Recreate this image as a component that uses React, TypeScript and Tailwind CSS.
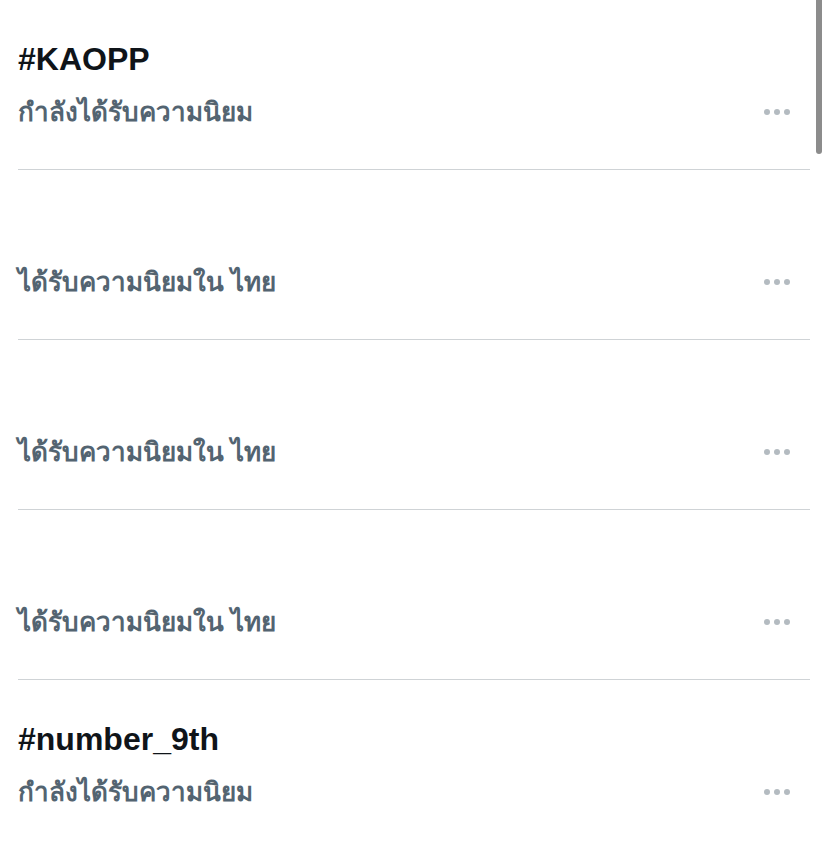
import React from "react";

type Row = { title?: string; sub: string };

const rows: Row[] = [
  { title: "#KAOPP", sub: "กำลังได้รับความนิยม" },
  { sub: "ได้รับความนิยมใน ไทย" },
  { sub: "ได้รับความนิยมใน ไทย" },
  { sub: "ได้รับความนิยมใน ไทย" },
  { title: "#number_9th", sub: "กำลังได้รับความนิยม" },
];

function Dots() {
  return (
    <div className="flex items-center gap-[4px] mr-[20px]">
      <span className="block w-[6px] h-[6px] rounded-full bg-[#b4bbc1]" />
      <span className="block w-[6px] h-[6px] rounded-full bg-[#b4bbc1]" />
      <span className="block w-[6px] h-[6px] rounded-full bg-[#b4bbc1]" />
    </div>
  );
}

export default function App() {
  return (
    <div
      className="relative w-[828px] h-[866px] bg-white overflow-hidden"
      style={{ fontFamily: "'Liberation Sans', 'DejaVu Sans', sans-serif" }}
    >
      <div className="absolute right-[6px] top-0 w-[6px] h-[154px] rounded-b-full bg-[#8c8c8c]" />
      <div className="pl-[18px] pr-[18px]">
        {rows.map((r, i) => (
          <div
            key={i}
            className={
              "h-[170px] pt-[39px] " +
              (i < rows.length - 1 ? "border-b border-[#cfd3d6]" : "")
            }
          >
            <div className="h-[40px] leading-[40px] text-[32px] font-bold text-[#0f1419]">
              {r.title ?? ""}
            </div>
            <div className="mt-[15px] h-[36px] flex items-center justify-between">
              <span className="text-[26px] font-bold text-[#536471] leading-[36px]">
                {r.sub}
              </span>
              <Dots />
            </div>
          </div>
        ))}
      </div>
    </div>
  );
}
